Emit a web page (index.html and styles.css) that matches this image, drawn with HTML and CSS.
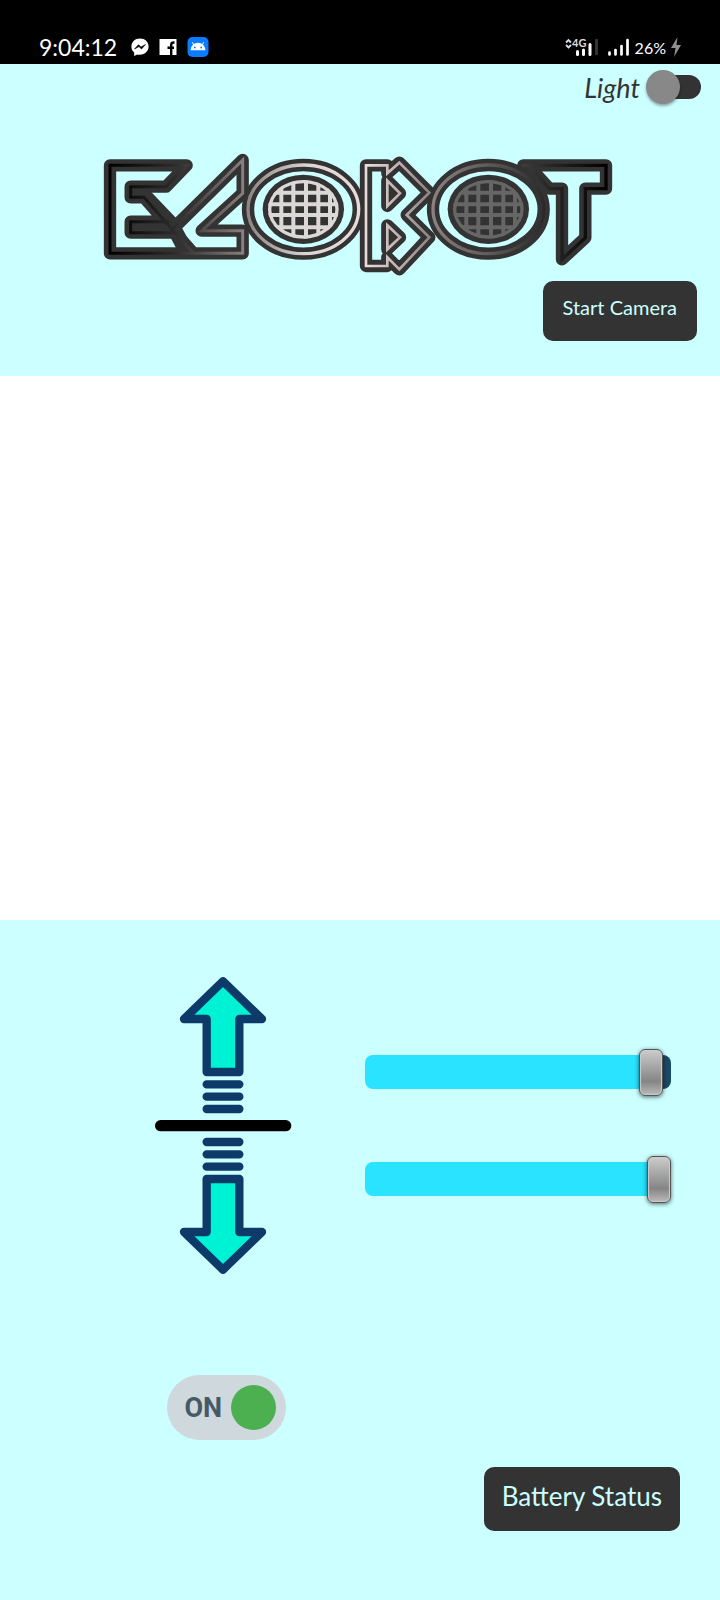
FILE: index.html
```html
<!DOCTYPE html>
<html lang="en">
<head>
<meta charset="utf-8">
<meta name="viewport" content="width=device-width, initial-scale=1">
<title>Ecobot</title>
<link rel="stylesheet" href="styles.css">
</head>
<body>
<div class="status">
  <span class="clock">9:04:12</span>
  <div class="apps">
    <svg width="18" height="18" viewBox="0 0 18 18"><path fill="#fff" d="M9 0.500C4 .5.4 4 .4 8.600c0 2.500 1 4.500 2.800 6V18l3-1.500c.9.200 1.800.300 2.800.300 5 0 8.600-3.600 8.600-8.200S14 .5 9 .5z"/><path d="M3.500 11 7.500 6.700 10 9 14.500 6.500 10.500 11 8 8.600z" fill="#000" stroke="#000" stroke-width=".6"/></svg>
    <svg width="18" height="18" viewBox="0 0 18 18"><path fill="#fff" d="M.5 1h17v16h-17z"/><path fill="none" stroke="#000" stroke-width="2.400" d="M15.500 4.500h-1q-2.300 0-2.300 2.500v10M8.500 9.800h6.500"/></svg>
    <svg width="22" height="22" viewBox="0 0 22 22"><rect x=".5" y="1" width="21" height="20" rx="5" fill="#0a7cff"/><path d="M3.500 14.300a7.500 7.500 0 0 1 15 0z" fill="#fff"/><path d="M6.800 9 5.300 6.300M15.200 9l1.500-2.700" stroke="#fff"/><circle cx="7.800" cy="11.500" r=".9" fill="#0a7cff"/><circle cx="14.200" cy="11.500" r=".9" fill="#0a7cff"/></svg>
  </div>
  <div class="signals">
    <svg class="mobile" width="34" height="20" viewBox="0 0 34 20"><path d="M1 5.500 3.500 3 6 5.500M1 8l2.500 2.500L6 8" fill="none" stroke="#ddd" stroke-width="1.800"/><text x="7" y="10" class="net">4G</text><path d="M12.500 14.500v3M18.500 13v4.500M25 7.500v10" stroke="#fff" stroke-width="3" stroke-linecap="round"/><path d="M31.500 2v16" stroke="#333" stroke-width="3"/></svg>
    <svg width="24" height="20" viewBox="0 0 24 20"><path d="M2.500 15.500v2M8.500 13v4.500M14.500 9v8.500M20.500 3v14.500" stroke="#fff" stroke-width="2.700" stroke-linecap="round"/></svg>
    <span class="percent">26%</span>
    <svg width="12" height="20" viewBox="0 0 12 20"><path d="M7.500 0 1 11h4.500L4 20 11 8H6.500z" fill="#8f8f8f"/></svg>
  </div>
</div>

<header class="top">
  <label class="light">Light <input class="switch" type="checkbox"></label>
  <svg class="logo" viewBox="30 36 1560 375" role="img" aria-label="Ecobot">
    <defs>
      <linearGradient id="metal" gradientUnits="userSpaceOnUse" x1="60" y1="0" x2="1550" y2="0">
        <stop offset="0" stop-color="#000"/><stop offset=".13" stop-color="#2d2b2b"/><stop offset=".27" stop-color="#8a8080"/><stop offset=".4" stop-color="#ddd6d6"/><stop offset=".52" stop-color="#eadada"/><stop offset=".65" stop-color="#8a8080"/><stop offset=".77" stop-color="#5c5858"/><stop offset=".87" stop-color="#2d2b2b"/><stop offset="1" stop-color="#000"/>
      </linearGradient>
      <g id="bars">
        <path d="M-66-90V90M-30-90V90M8-90V90M45-90V90M80-90V90M-106-50H106M-106-15H106M-106 17H106M-106 54H106"/>
      </g>
      <clipPath id="disc"><ellipse rx="106" ry="88"/></clipPath>
      <path id="frame" d="M245 270 458 60V160L335 272H458V340H60V76H290L228 140H122V172H162L310 340M235 245H122V278H250"/>
      <path id="stem" d="M828 76H892V100L928 68 1018 158 950 225 1018 292 928 388 892 352V378H828ZM892 122 930 160 892 198ZM892 256 930 292 892 328Z"/>
      <path id="post" d="M1300 76H1548V146H1486V293L1416 358V146H1378L1320 82"/>
    </defs>
    <g fill="none" stroke-linejoin="round" stroke-linecap="round">
      <path d="M150 150H225L255 235V300L300 338 228 322 245 262Z" fill="none"/>
      <path d="M165 168 245 252 280 318" stroke="#333" stroke-width="44"/>
      <use href="#frame" stroke="#333" stroke-width="37"/>
      <use href="#frame" stroke="url(#metal)" stroke-width="9" stroke-linejoin="miter"/>
      <ellipse cx="640" cy="208" rx="166" ry="133" stroke="#333" stroke-width="37"/>
      <use href="#stem" stroke="#333" stroke-width="37"/>
      <ellipse cx="640" cy="208" rx="166" ry="133" stroke="url(#metal)" stroke-width="10"/>
      <ellipse cx="1195" cy="208" rx="166" ry="133" stroke="#333" stroke-width="37"/>
      <use href="#stem" stroke="url(#metal)" stroke-width="8" stroke-linejoin="miter"/>
      <ellipse cx="1195" cy="208" rx="166" ry="133" stroke="url(#metal)" stroke-width="10"/>
      <use href="#post" stroke="#333" stroke-width="37"/>
      <use href="#post" stroke="url(#metal)" stroke-width="10" stroke-linejoin="miter"/>
    </g>
    <g transform="translate(640 208)"><ellipse rx="122" ry="104" fill="#333"/><g clip-path="url(#disc)" fill="none" stroke="#dcd8d8"><use href="#bars" stroke-width="12"/><ellipse rx="102" ry="84" stroke-width="12"/></g></g>
    <g transform="translate(1195 208)"><ellipse rx="122" ry="104" fill="#333"/><g clip-path="url(#disc)" fill="none" stroke="#666"><use href="#bars" stroke-width="12"/><ellipse rx="102" ry="84" stroke-width="12"/></g></g>
  </svg>
  <button class="btn camera-btn" type="button">Start Camera</button>
</header>

<main>
  <section class="camera" aria-label="Camera view"></section>
  <section class="controls">
    <svg class="arrows" viewBox="42 48 414 897" role="img" aria-label="Forward and reverse">
      <g fill="#00f2d5" stroke="#0c3b69" stroke-width="25" stroke-linejoin="round" stroke-linecap="round">
        <path d="M249 64 132 177H200V336H298V177H366Z"/>
        <path d="M249 929 132 816H200V657H298V816H366Z"/>
        <path d="M200 373H298M200 410H298M200 447H298M200 546H298M200 583H298M200 620H298"/>
      </g>
      <path d="M62 497H437" stroke="#000" stroke-width="34" stroke-linecap="round"/>
    </svg>
    <div class="sliders">
      <input class="slider" type="range" min="0" max="100" value="97" aria-label="Left motor speed" style="--fill:97%">
      <input class="slider" type="range" min="0" max="100" value="100" aria-label="Right motor speed" style="--fill:99%">
    </div>
    <label class="power">ON <input class="knob" type="checkbox" checked></label>
    <button class="btn battery-btn" type="button">Battery Status</button>
  </section>
</main>
</body>
</html>
```
FILE: styles.css
```css
* { box-sizing: border-box; }

body {
  margin: 0;
  background: #ccffff;
  color: #333;
  font-family: Lato, "Open Sans", sans-serif;
}

svg { display: block; }

.status {
  display: flex;
  align-items: center;
  height: 64px;
  padding: 30px 38px 0 39px;
  background: #000;
  color: #fff;
}

.clock { font-size: 23px; }

.apps {
  display: flex;
  align-items: center;
  gap: 10px;
  margin-left: 14px;
}

.signals {
  display: flex;
  align-items: center;
  gap: 4px;
  margin-left: auto;
}

.mobile { margin-right: 4px; }

.net {
  fill: #ddd;
  font-size: 11px;
  font-weight: bold;
}

.percent { font-size: 16px; }

.top {
  display: flex;
  flex-direction: column;
  padding-bottom: 35px;
}

.light {
  display: flex;
  align-items: center;
  align-self: flex-end;
  gap: 6px;
  height: 46px;
  padding-right: 19px;
  font-size: 27px;
  font-style: italic;
}

.switch {
  display: flex;
  align-items: center;
  appearance: none;
  width: 55px;
  height: 24px;
  margin: 0;
  background: linear-gradient(#333, #333) right center / 40px 24px no-repeat;
  border-radius: 12px;
}

.switch::before {
  content: "";
  width: 34px;
  height: 34px;
  border-radius: 50%;
  background: #888;
  box-shadow: 0 2px 3px rgba(0, 0, 0, 0.35);
}

.switch:checked { justify-content: flex-end; }

.logo {
  width: 520px;
  max-width: 90%;
  height: auto;
  margin: 42px auto 4px;
}

.btn {
  border: 0;
  border-radius: 10px;
  background: #333;
  color: #ccffff;
  font-family: inherit;
}

.camera-btn {
  align-self: flex-end;
  height: 60px;
  margin-right: 23px;
  padding: 0 20px 8px;
  font-size: 20px;
}

.camera {
  height: 544px;
  background: #fff;
}

.controls {
  display: grid;
  grid-template-columns: 284fr 315fr;
  padding: 56px 40px 69px 81px;
}

.arrows {
  width: 138px;
  height: auto;
  justify-self: center;
}

.sliders {
  display: flex;
  flex-direction: column;
  justify-content: center;
  gap: 73px;
  padding-right: 9px;
}

.slider {
  appearance: none;
  width: 100%;
  height: 34px;
  margin: 0;
  border-radius: 8px;
  background: linear-gradient(to right, #29e3ff var(--fill), #1a4a66 var(--fill));
}

.slider::-webkit-slider-thumb {
  appearance: none;
  width: 24px;
  height: 47px;
  border: 1px solid #555;
  border-radius: 6px;
  background: linear-gradient(#ccc, #858585 70%, #bbb);
  box-shadow: 0 1px 4px rgba(0, 0, 0, 0.6), inset 0 0 1px 1px #ccc;
}

.power {
  display: flex;
  align-items: center;
  justify-content: space-between;
  justify-self: center;
  width: 119px;
  height: 65px;
  margin: 100px 0 27px 6px;
  padding: 0 10px 0 18px;
  border-radius: 33px;
  background: #cfd8dd;
  color: #455a66;
  font-family: Roboto, "Open Sans", sans-serif;
  font-size: 27px;
  font-weight: bold;
}

.knob {
  appearance: none;
  flex: none;
  width: 45px;
  height: 45px;
  margin: 0;
  border-radius: 50%;
  background: #4caf50;
}

.battery-btn {
  grid-column: 1 / -1;
  justify-self: end;
  height: 64px;
  padding: 0 18px 7px;
  font-size: 26px;
}
```
